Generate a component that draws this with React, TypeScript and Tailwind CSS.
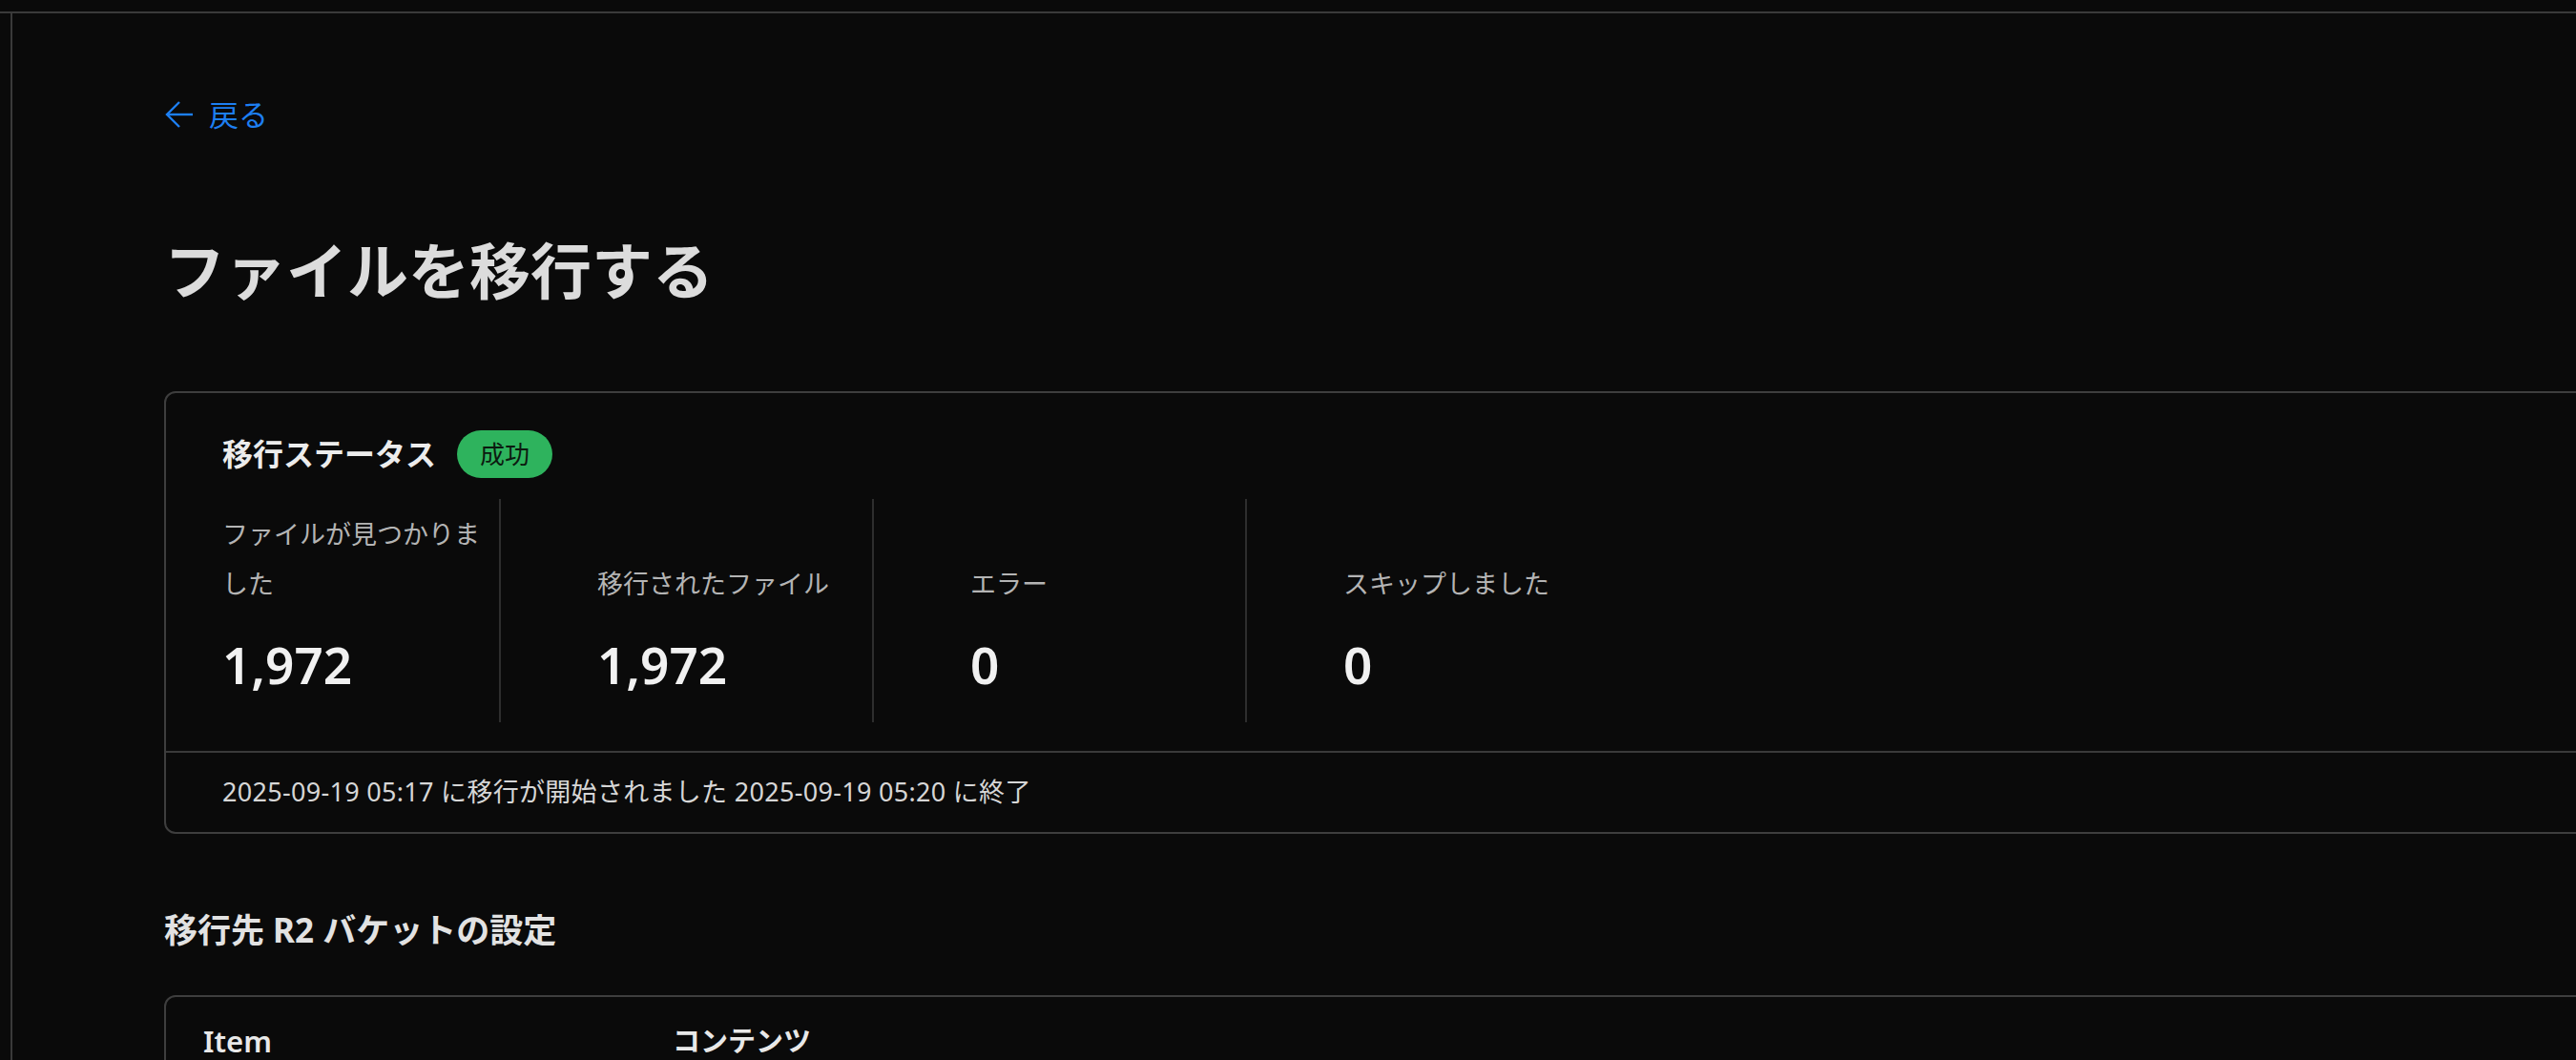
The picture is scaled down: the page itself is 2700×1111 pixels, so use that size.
import React from "react";

function BackArrow() {
  return (
    <svg width="31" height="30" viewBox="0 0 31 30" fill="none" className="shrink-0">
      <path d="M30 15H3" stroke="#1d7ff2" strokeWidth="2.4" />
      <path d="M16 2L3 15L16 28" stroke="#1d7ff2" strokeWidth="2.4" />
    </svg>
  );
}

function Stat({ label, value, first }: { label: React.ReactNode; value: string; first?: boolean }) {
  return (
    <div
      className={
        first
          ? "flex w-[290px] shrink-0 flex-col justify-end pt-[11px] pb-[25px]"
          : "flex w-[391px] shrink-0 flex-col justify-end border-l-2 border-[#2e2e2e] pl-[101px] pt-[11px] pb-[25px]"
      }
    >
      <div className="whitespace-nowrap text-[27px] leading-[52px] text-[#b4b4b4]">{label}</div>
      <div className="mt-[24px] text-[53px] font-semibold leading-[70px] text-[#f1f1f1]">{value}</div>
    </div>
  );
}

export default function App() {
  return (
    <div className="h-[1111px] w-full overflow-hidden bg-[#0a0a0a] font-['Noto_Sans','Noto_Sans_CJK_JP',sans-serif]">
      <div className="h-[14px] border-b-2 border-[#3a3a3a]" />
      <div className="flex">
        <div className="h-[1200px] w-[13px] shrink-0 border-r-2 border-[#3a3a3a]" />
        <main className="flex flex-col pl-[159px] pt-[86px]">
          <a className="flex items-center gap-[16px] text-[31px] leading-[40px] text-[#1d7ff2]">
            <BackArrow />
            <span>戻る</span>
          </a>

          <h1 className="mt-[104px] text-[64px] font-semibold leading-[80px] text-[#dcdcdc]">
            ファイルを移行する
          </h1>

          <section className="mt-[86px] w-[2600px] rounded-[12px] border-2 border-[#3e3e3e]">
            <div className="px-[59px] pt-[39px] pb-[30px]">
              <div className="flex h-[50px] items-center gap-[22px]">
                <h2 className="text-[32px] font-bold leading-[50px] text-[#ececec]">移行ステータス</h2>
                <span className="flex h-[50px] items-center rounded-full bg-[#2eb35d] px-[24px] text-[26px] text-[#0c1a10]">
                  成功
                </span>
              </div>
              <div className="mt-[22px] flex">
                <Stat
                  first
                  label={
                    <>
                      ファイルが見つかりま
                      <br />
                      した
                    </>
                  }
                  value="1,972"
                />
                <Stat label="移行されたファイル" value="1,972" />
                <Stat label="エラー" value="0" />
                <Stat label="スキップしました" value="0" />
              </div>
            </div>
            <div className="flex h-[85px] items-center border-t-2 border-[#3a3a3a] px-[59px] text-[27px] tracking-[0.3px] text-[#d6d6d6]">
              2025-09-19 05:17 に移行が開始されました 2025-09-19 05:20 に終了
            </div>
          </section>

          <h2 className="mt-[76px] text-[35px] font-bold leading-[50px] text-[#e2e2e2]">
            移行先 R2 バケットの設定
          </h2>

          <section className="mt-[43px] w-[2600px] rounded-[12px] border-2 border-[#3e3e3e]">
            <div className="flex px-[39px] pt-[28px] text-[31px] font-semibold leading-[36px] text-[#e8e8e8]">
              <div className="w-[492px] shrink-0">Item</div>
              <div className="text-[29px]">コンテンツ</div>
            </div>
            <div className="h-[120px]" />
          </section>
        </main>
      </div>
    </div>
  );
}
